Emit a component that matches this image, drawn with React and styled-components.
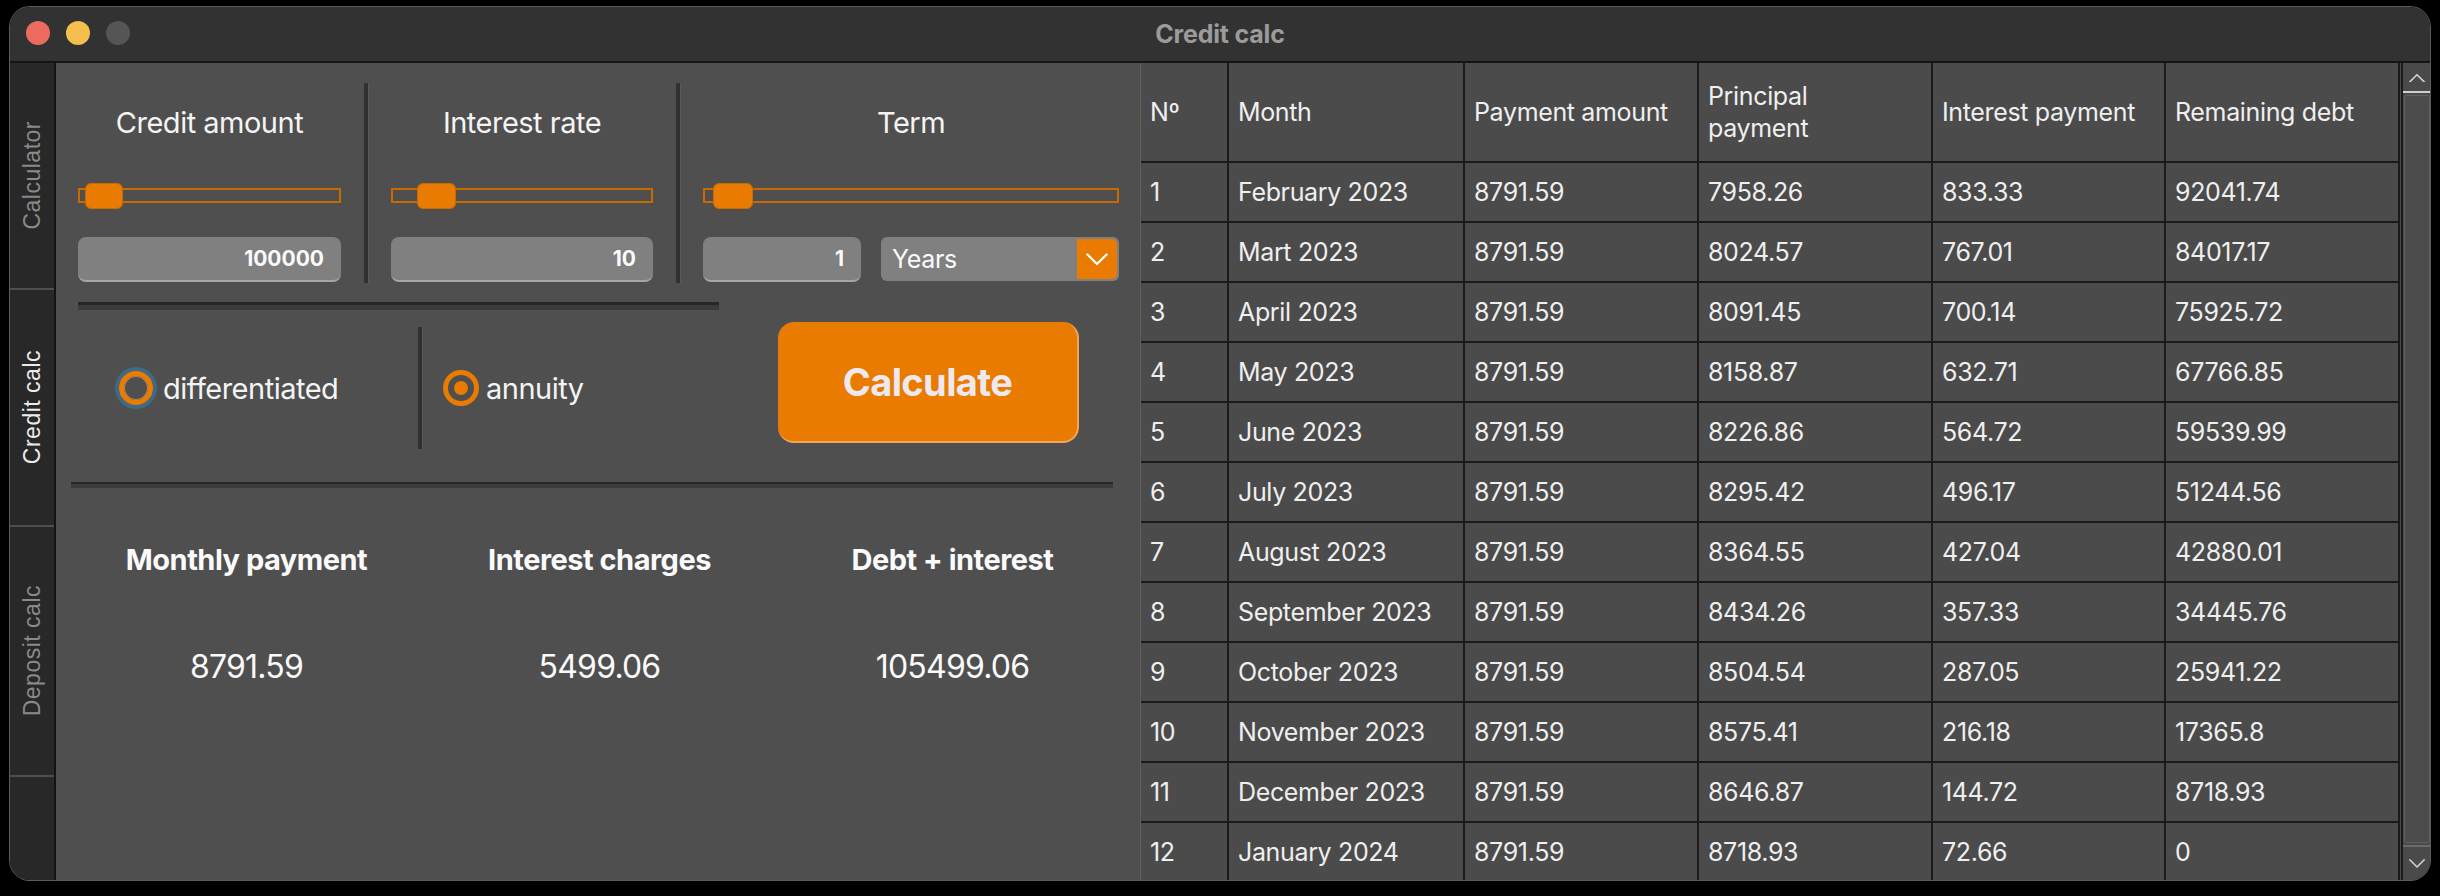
import React from "react";
import styled, { createGlobalStyle } from "styled-components";

const GlobalStyle = createGlobalStyle`
  html, body {
    margin: 0;
    padding: 0;
    background: #000;
    width: 2440px;
    height: 896px;
    overflow: hidden;
  }
  * { box-sizing: border-box; }
`;

const UI = `"Inter", "Liberation Sans", sans-serif`;

const rows = [
  ["1", "February 2023", "8791.59", "7958.26", "833.33", "92041.74"],
  ["2", "Mart 2023", "8791.59", "8024.57", "767.01", "84017.17"],
  ["3", "April 2023", "8791.59", "8091.45", "700.14", "75925.72"],
  ["4", "May 2023", "8791.59", "8158.87", "632.71", "67766.85"],
  ["5", "June 2023", "8791.59", "8226.86", "564.72", "59539.99"],
  ["6", "July 2023", "8791.59", "8295.42", "496.17", "51244.56"],
  ["7", "August 2023", "8791.59", "8364.55", "427.04", "42880.01"],
  ["8", "September 2023", "8791.59", "8434.26", "357.33", "34445.76"],
  ["9", "October 2023", "8791.59", "8504.54", "287.05", "25941.22"],
  ["10", "November 2023", "8791.59", "8575.41", "216.18", "17365.8"],
  ["11", "December 2023", "8791.59", "8646.87", "144.72", "8718.93"],
  ["12", "January 2024", "8791.59", "8718.93", "72.66", "0"],
];

const Chevron = ({ up, color = "#fff", size = 22 }) => (
  <svg width={size} height={size * 0.6} viewBox="0 0 20 12" fill="none">
    <polyline
      points={up ? "2,11 10,3 18,11" : "2,2 10,10 18,2"}
      stroke={color}
      strokeWidth="1.8"
      strokeLinecap="round"
      strokeLinejoin="round"
    />
  </svg>
);

const Slider = ({ pos, handleWidth }) => (
  <Groove>
    <Handle style={{ left: pos, width: handleWidth }} />
  </Groove>
);

const Radio = ({ checked, focused, label }) => (
  <RadioWrap>
    <RadioCircle $focused={focused} $checked={checked}>
      {checked && <RadioDot />}
    </RadioCircle>
    <RadioLabel>{label}</RadioLabel>
  </RadioWrap>
);

const App = () => {
  return (
    <>
      <GlobalStyle />
      <Window>
        <TitleBar>
          <Lights>
            <Light $color="#ed6a5e" />
            <Light $color="#f4bf4f" />
            <Light $color="#555555" />
          </Lights>
          <Title>Credit calc</Title>
        </TitleBar>
        <Body>
          <Sidebar>
            <Tab $h={227}>
              <TabLabel>Calculator</TabLabel>
            </Tab>
            <Tab $h={237} $active>
              <TabLabel $active>Credit calc</TabLabel>
            </Tab>
            <Tab $h={250}>
              <TabLabel>Deposit calc</TabLabel>
            </Tab>
          </Sidebar>

          <Panel>
            <InputsRow>
              <Field $w={263}>
                <FieldLabel>Credit amount</FieldLabel>
                <Slider pos={5} handleWidth={38} />
                <Controls>
                  <ValueBox>100000</ValueBox>
                </Controls>
              </Field>
              <VSep $m={23} />
              <Field $w={262}>
                <FieldLabel>Interest rate</FieldLabel>
                <Slider pos={24} handleWidth={39} />
                <Controls>
                  <ValueBox>10</ValueBox>
                </Controls>
              </Field>
              <VSep $m={23} />
              <Field $w={416}>
                <FieldLabel>Term</FieldLabel>
                <Slider pos={8} handleWidth={40} />
                <Controls>
                  <ValueBox $w={158}>1</ValueBox>
                  <Combo>
                    <ComboText>Years</ComboText>
                    <ComboArrow>
                      <Chevron size={24} />
                    </ComboArrow>
                  </Combo>
                </Controls>
              </Field>
            </InputsRow>

            <HSep $w={641} $ml={22} $mt={19} $dark={3} $light={5} />

            <ModeRow>
              <RadioCell $w={362} $pl={60}>
                <Radio focused label="differentiated" />
              </RadioCell>
              <VSep $h={122} $m={0} />
              <RadioCell $w={356} $pl={21}>
                <Radio checked label="annuity" />
              </RadioCell>
              <CalcButton>Calculate</CalcButton>
            </ModeRow>

            <HSep $w={1042} $ml={15} $mt={16} $dark={2} $light={4} />

            <Results>
              <ResultCol>
                <ResultTitle>Monthly payment</ResultTitle>
                <ResultValue>8791.59</ResultValue>
              </ResultCol>
              <ResultCol>
                <ResultTitle>Interest charges</ResultTitle>
                <ResultValue>5499.06</ResultValue>
              </ResultCol>
              <ResultCol>
                <ResultTitle>Debt + interest</ResultTitle>
                <ResultValue>105499.06</ResultValue>
              </ResultCol>
            </Results>
          </Panel>

          <TableArea>
            <Table>
              <HeadCell>Nº</HeadCell>
              <HeadCell>Month</HeadCell>
              <HeadCell>Payment amount</HeadCell>
              <HeadCell>
                Principal
                <br />
                payment
              </HeadCell>
              <HeadCell>Interest payment</HeadCell>
              <HeadCell>Remaining debt</HeadCell>
              {rows.map((row) =>
                row.map((v, i) => <Cell key={row[0] + "-" + i}>{v}</Cell>)
              )}
            </Table>
            <ScrollBar>
              <ScrollButton $top>
                <Chevron up color="#d0d0d0" size={18} />
              </ScrollButton>
              <ScrollTrack>
                <ScrollHandle />
              </ScrollTrack>
              <ScrollButton>
                <Chevron color="#d0d0d0" size={18} />
              </ScrollButton>
            </ScrollBar>
          </TableArea>
        </Body>
      </Window>
    </>
  );
};

const Window = styled.div`
  margin: 7px 0 0 10px;
  width: 2420px;
  height: 873px;
  border-radius: 20px;
  overflow: hidden;
  box-shadow: 0 0 0 1px #5a5a5a;
  display: flex;
  flex-direction: column;
  font-family: ${UI};
  color: #f2f2f2;
`;

const TitleBar = styled.div`
  position: relative;
  height: 56px;
  flex: none;
  background: #323232;
  border-bottom: 2px solid #141414;
  display: flex;
  align-items: center;
  justify-content: center;
`;

const Lights = styled.div`
  position: absolute;
  left: 16px;
  top: 14px;
  display: flex;
  gap: 16px;
`;

const Light = styled.span`
  width: 24px;
  height: 24px;
  border-radius: 50%;
  background: ${(p) => p.$color};
`;

const Title = styled.div`
  font-size: 25px;
  font-weight: 700;
  color: #9b9b9b;
  letter-spacing: -0.2px;
`;

const Body = styled.div`
  flex: 1;
  display: flex;
  min-height: 0;
`;

const Sidebar = styled.div`
  width: 46px;
  flex: none;
  background: #282828;
  border-right: 2px solid #141414;
  display: flex;
  flex-direction: column;
`;

const Tab = styled.div`
  height: ${(p) => p.$h}px;
  border-bottom: 2px solid #4e4e4e;
  display: flex;
  align-items: center;
  justify-content: center;
`;

const TabLabel = styled.span`
  writing-mode: vertical-rl;
  transform: rotate(180deg);
  font-family: "Liberation Sans", Arial, sans-serif;
  font-size: 23px;
  letter-spacing: 0.5px;
  color: ${(p) => (p.$active ? "#ececec" : "#8a8a8a")};
`;

const Panel = styled.div`
  width: 1084px;
  flex: none;
  background: #4f4f4f;
  display: flex;
  flex-direction: column;
`;

const InputsRow = styled.div`
  display: flex;
  margin: 20px 0 0 22px;
  height: 200px;
`;

const Field = styled.div`
  width: ${(p) => p.$w}px;
  display: flex;
  flex-direction: column;
  padding-top: 20px;
`;

const FieldLabel = styled.div`
  height: 40px;
  line-height: 40px;
  text-align: center;
  font-size: 29px;
  letter-spacing: -0.5px;
  color: #f4f4f4;
`;

const Groove = styled.div`
  position: relative;
  margin-top: 45px;
  height: 15px;
  border: 2px solid #c86a00;
`;

const Handle = styled.span`
  position: absolute;
  top: -7px;
  height: 26px;
  background: #e87b00;
  border: 1px solid #c86a00;
  border-radius: 6px;
`;

const Controls = styled.div`
  margin-top: 34px;
  display: flex;
  gap: 20px;
`;

const ValueBox = styled.div`
  width: ${(p) => (p.$w ? `${p.$w}px` : "100%")};
  height: 45px;
  background: #808080;
  border-radius: 8px;
  border-bottom: 2px solid #a6a6a6;
  padding-right: 17px;
  text-align: right;
  line-height: 44px;
  font-size: 21px;
  font-weight: 700;
  color: #fafafa;
`;

const Combo = styled.div`
  flex: 1;
  height: 44px;
  background: #808080;
  border-radius: 6px;
  display: flex;
  align-items: stretch;
  padding: 2px;
`;

const ComboText = styled.div`
  flex: 1;
  padding-left: 9px;
  line-height: 40px;
  font-size: 25px;
  letter-spacing: -0.3px;
  color: #fafafa;
`;

const ComboArrow = styled.div`
  width: 40px;
  background: #e87b00;
  border-radius: 0 5px 5px 0;
  display: flex;
  align-items: center;
  justify-content: center;
`;

const VSep = styled.div`
  width: 4px;
  height: ${(p) => (p.$h ? `${p.$h}px` : "auto")};
  margin: 0 ${(p) => p.$m}px;
  background: #313131;
  box-shadow: 1px 0 0 #5a5a5a;
  flex: none;
`;

const HSep = styled.div`
  width: ${(p) => p.$w}px;
  margin-left: ${(p) => p.$ml}px;
  margin-top: ${(p) => p.$mt}px;
  height: ${(p) => p.$dark + p.$light}px;
  border-top: ${(p) => p.$dark}px solid #272727;
  background: #3b3b3b;
  flex: none;
`;

const ModeRow = styled.div`
  height: 156px;
  display: flex;
  align-items: center;
`;

const RadioCell = styled.div`
  width: ${(p) => p.$w}px;
  padding-left: ${(p) => p.$pl}px;
  flex: none;
  display: flex;
  align-items: center;
`;

const RadioWrap = styled.div`
  display: flex;
  align-items: center;
  gap: 7px;
`;

const RadioCircle = styled.span`
  width: ${(p) => (p.$focused ? 34 : 36)}px;
  height: ${(p) => (p.$focused ? 34 : 36)}px;
  margin: ${(p) => (p.$focused ? "3px" : "0")};
  border-radius: 50%;
  border: 5px solid #e87b00;
  box-shadow: ${(p) =>
    p.$focused ? "0 0 0 4px #3e6a8a, inset 0 0 0 1px #b08858" : "none"};
  display: flex;
  align-items: center;
  justify-content: center;
`;

const RadioDot = styled.span`
  width: 14px;
  height: 14px;
  border-radius: 50%;
  background: #e87b00;
`;

const RadioLabel = styled.span`
  font-size: 29px;
  letter-spacing: -0.5px;
  color: #f4f4f4;
`;

const CalcButton = styled.button`
  width: 301px;
  height: 121px;
  margin-bottom: 11px;
  background: #e87b00;
  border: none;
  border-right: 2px solid #f6a558;
  border-bottom: 2px solid #f6a558;
  border-radius: 16px;
  font-family: ${UI};
  font-size: 38px;
  font-weight: 700;
  letter-spacing: -0.6px;
  color: #eee9f0;
  padding: 0;
`;

const Results = styled.div`
  display: grid;
  grid-template-columns: repeat(3, 353px);
  margin-left: 14px;
  padding-top: 52px;
`;

const ResultCol = styled.div`
  display: flex;
  flex-direction: column;
  align-items: center;
`;

const ResultTitle = styled.div`
  height: 40px;
  line-height: 40px;
  font-size: 29px;
  font-weight: 700;
  letter-spacing: -0.5px;
  color: #fafafa;
`;

const ResultValue = styled.div`
  margin-top: 65px;
  height: 44px;
  line-height: 44px;
  font-size: 32px;
  letter-spacing: -0.8px;
  color: #fafafa;
`;

const TableArea = styled.div`
  flex: 1;
  display: flex;
  border-left: 1px solid #5e5e5e;
  background: #4b4b4b;
  min-width: 0;
`;

const Table = styled.div`
  display: grid;
  grid-template-columns: 88px 236px 234px 234px 233px 234px;
  grid-template-rows: 100px;
  grid-auto-rows: 60px;
  width: 1260px;
  overflow: hidden;
  align-content: start;
`;

const Cell = styled.div`
  border-right: 2px solid #1b1b1b;
  border-bottom: 2px solid #1b1b1b;
  padding-left: 9px;
  display: flex;
  align-items: center;
  font-size: 25px;
  letter-spacing: -0.35px;
  color: #efefef;
  background: #4b4b4b;
`;

const HeadCell = styled(Cell)`
  line-height: 32px;
`;

const ScrollBar = styled.div`
  width: 29px;
  flex: none;
  display: flex;
  flex-direction: column;
  border-left: 2px solid #1b1b1b;
  background: #4a4a4a;
`;

const ScrollButton = styled.div`
  height: ${(p) => (p.$top ? 30 : 35)}px;
  flex: none;
  display: flex;
  align-items: center;
  justify-content: center;
  ${(p) =>
    p.$top
      ? "border-bottom: 2px solid #cfcfcf;"
      : "border-top: 2px solid #6a6a6a;"}
`;

const ScrollTrack = styled.div`
  flex: 1;
  padding: 2px 0 2px 1px;
  display: flex;
`;

const ScrollHandle = styled.div`
  flex: 1;
  border: 1px solid #606060;
  border-radius: 2px;
  background: #4c4c4c;
`;

export default App;
